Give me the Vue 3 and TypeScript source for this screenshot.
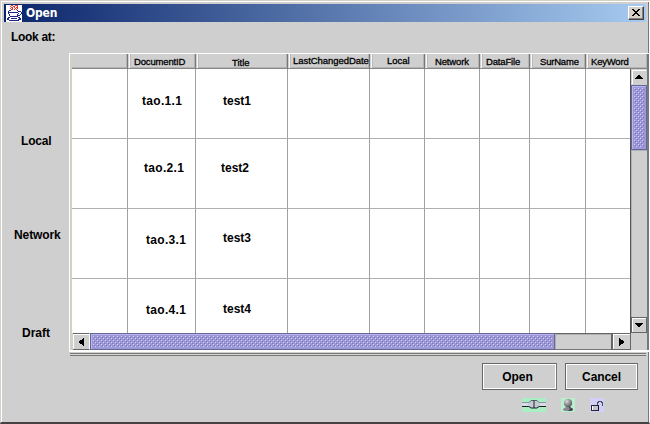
<script setup lang="ts">
interface Column { name: string; width: number; inset: number; drop: number; space: number }
interface Row { id: string; title: string; idX: number; titleX: number; idY: number; titleY: number }

const columns: Column[] = [
  { name: '', width: 56, inset: 0, drop: 0, space: 0 },
  { name: 'DocumentID', width: 68, inset: 6, drop: 1, space: -0.15 },
  { name: 'Title', width: 92, inset: 36, drop: 2, space: 0 },
  { name: 'LastChangedDate', width: 82, inset: 5, drop: 0, space: -0.05 },
  { name: 'Local', width: 55, inset: 17, drop: 0, space: 0 },
  { name: 'Network', width: 55, inset: 10, drop: 1, space: -0.15 },
  { name: 'DataFile', width: 50, inset: 6, drop: 1, space: -0.15 },
  { name: 'SurName', width: 56, inset: 10, drop: 1, space: -0.2 },
  { name: 'KeyWord', width: 61, inset: 5, drop: 1, space: -0.2 },
]
const rows: Row[] = [
  { id: 'tao.1.1', title: 'test1', idX: 14, titleX: 27, idY: 24, titleY: 24 },
  { id: 'tao.2.1', title: 'test2', idX: 16, titleX: 25, idY: 21, titleY: 21 },
  { id: 'tao.3.1', title: 'test3', idX: 18, titleX: 27, idY: 23, titleY: 21 },
  { id: 'tao.4.1', title: 'test4', idX: 18, titleX: 27, idY: 23, titleY: 22 },
]
const gridColumns = columns.map((c, i) => (i === 8 ? 45 : c.width) + 'px').join(' ')
const headColumns = columns.map(c => c.width + 'px').join(' ')
</script>

<template>
  <div class="window">
    <header class="titlebar">
      <svg class="java" width="16" height="17" viewBox="0 0 16 17" shape-rendering="crispEdges">
        <rect width="16" height="17" fill="#fff" />
        <path d="M5 0h2M9 0h3M4 1h1M7 1h2M11 1h1M5 2h2M8 2h1M10 2h2M4 3h1M6 3h1M9 3h1M11 3h1M5 4h2M8 4h1M10 4h1" transform="translate(0 .5)" stroke="#e33" fill="none" />
        <path d="M3 5h2M11 5h1M2 6h1M12 6h3M2 7h10M15 7h1M2 8h1M12 8h1M15 8h1M3 9h1M11 9h1M14 9h1M3 10h1M11 10h3M4 11h8M2 12h2M12 12h2M1 13h2M5 13h6M13 13h2M1 14h2M12 14h3M3 15h10" transform="translate(0 .5)" stroke="#20208f" fill="none" />
      </svg>
      <span class="caption">Open</span>
      <button class="close" aria-label="Close">
        <svg width="8" height="7" viewBox="0 0 8 7" shape-rendering="crispEdges">
          <path d="M0 0h2v1h1v1h2V1h1V0h2v1H7v1H6v1H5v1h1v1h1v1h1v1H6V6H5V5H3v1H2v1H0V6h1V5h1V4h1V3H2V2H1V1H0z" />
        </svg>
      </button>
    </header>
    <div class="look">Look at:</div>
    <main class="main">
      <nav class="places">
        <span class="place local">Local</span>
        <span class="place network">Network</span>
        <span class="place draft">Draft</span>
      </nav>
      <section class="panel">
        <div class="head" :style="{ gridTemplateColumns: headColumns }">
          <div v-for="c in columns" :key="c.name" class="th" :style="{ paddingLeft: c.inset + 'px', paddingTop: c.drop + 'px', letterSpacing: c.space + 'px' }">{{ c.name }}</div>
        </div>
        <div class="body">
          <div class="grid">
            <div v-for="r in rows" :key="r.id" class="row" :style="{ gridTemplateColumns: gridColumns }">
              <div v-for="(c, i) in columns" :key="c.name" class="td">
                <span v-if="i === 1" class="value id" :style="{ marginLeft: r.idX + 'px', marginTop: r.idY + 'px' }">{{ r.id }}</span>
                <span v-if="i === 2" class="value" :style="{ marginLeft: r.titleX + 'px', marginTop: r.titleY + 'px' }">{{ r.title }}</span>
              </div>
            </div>
          </div>
          <div class="vbar">
            <div class="step up"><svg width="8" height="4" viewBox="0 0 8 4" shape-rendering="crispEdges"><path d="M3 0h2v1h1v1h1v1h1v1H0V3h1V2h1V1h1z" /></svg></div>
            <div class="thumb vthumb">
              <svg class="bumps" shape-rendering="crispEdges">
                <defs>
                  <pattern id="bumps" width="4" height="4" patternUnits="userSpaceOnUse">
                    <path d="M0 0h1v1H0zM2 2h1v1H2z" fill="#d4d0fa" />
                    <path d="M1 1h1v1H1zM3 3h1v1H3z" fill="#7874b4" />
                  </pattern>
                </defs>
                <rect width="100%" height="100%" fill="url(#bumps)" />
              </svg>
            </div>
            <div class="track"></div>
            <div class="step down"><svg width="8" height="4" viewBox="0 0 8 4" shape-rendering="crispEdges"><path d="M0 0h8v1H7v1H6v1H5v1H3V3H2V2H1V1H0z" /></svg></div>
          </div>
        </div>
        <div class="hbar">
          <div class="step left"><svg width="5" height="8" viewBox="0 0 5 8" shape-rendering="crispEdges"><path d="M5 0v8H4V7H3V6H1V5H0V3h1V2h2V1h1V0z" /></svg></div>
          <div class="thumb hthumb">
            <svg class="bumps" shape-rendering="crispEdges"><rect width="100%" height="100%" fill="url(#bumps)" /></svg>
          </div>
          <div class="track htrack"></div>
          <div class="step right"><svg width="5" height="8" viewBox="0 0 5 8" shape-rendering="crispEdges"><path d="M0 0v8h1V7h1V6h2V5h1V3H4V2H2V1H1V0z" /></svg></div>
        </div>
      </section>
    </main>
    <div class="ledge"></div>
    <div class="actions">
      <button class="button open">Open</button>
      <button class="button cancel">Cancel</button>
    </div>
    <footer class="status">
      <svg class="plug" width="24" height="14" viewBox="0 0 24 14">
        <rect width="24" height="14" fill="#a9efc3" />
        <path d="M0 4h8v4H0zM16 4h8v4h-8z" fill="#d9dce5" />
        <path d="M0 4.5h7M17 4.5h7" stroke="#8b969b" />
        <path d="M0 8.5h8M16 8.5h8" stroke="#182025" />
        <path d="M6.5 5L9 2.5h6L17.5 5v3L15 10H9L6.5 8z" fill="#c5cad5" />
        <path d="M7 4.5L9 2.5h6l2 2" fill="none" stroke="#59646b" />
        <path d="M7 8.5L9 10h6l2-1.5M12 2.5V10" fill="none" stroke="#182025" />
      </svg>
      <svg class="person" width="14" height="14" viewBox="0 0 14 14">
        <defs><radialGradient id="head" cx=".35" cy=".3" r=".75"><stop stop-color="#ddd" /><stop offset=".5" stop-color="#929298" /><stop offset="1" stop-color="#55555c" /></radialGradient></defs>
        <rect width="14" height="14" fill="#b9efcd" />
        <path d="M5 8h4v1l3 2v1l-2 1H4l-2-1v-1l3-2z" fill="#888890" />
        <path d="M7 8h2v1l3 2v1l-2 1H7l2-2z" fill="#45454e" />
        <circle cx="7" cy="5" r="4.1" fill="url(#head)" />
      </svg>
      <svg class="lock" width="14" height="14" viewBox="0 0 14 14" shape-rendering="crispEdges">
        <rect width="14" height="14" fill="#d2d0f8" />
        <path d="M7.5 7V4.5h1v-1h3v1h1V8" fill="none" stroke="#4e4e62" />
        <rect x="1.5" y="7.5" width="7" height="5" fill="#c2c2cf" stroke="#282832" />
        <path d="M2.5 8v4" stroke="#fff" /><path d="M8.5 7v6" stroke="#151519" />
      </svg>
    </footer>
  </div>
</template>

<style>
body { margin: 0; overflow: hidden; }
</style>
<style scoped>
* { box-sizing: border-box; }
.window { width: 650px; height: 424px; background: #cfcfcf; border: 1px solid #d4d0c8; border-right: 1px solid #fff; border-bottom: 2px solid #454145; box-shadow: inset 1px 1px #fff, inset -1px 0 #777; padding: 3px 2px 0 3px; font: bold 12px/16px "Liberation Sans", Arial, sans-serif; color: #000; }
.titlebar { display: flex; align-items: center; height: 18px; width: 642px; padding-left: 2px; background: linear-gradient(90deg, #0a246a, #a6caf0); color: #fff; }
.java { flex: none; }
.caption { margin: 0 auto 0 4px; font-family: "DejaVu Sans Condensed", "DejaVu Sans", sans-serif; font-size: 12px; line-height: 18px; letter-spacing: -.2px; }
.close { width: 16px; height: 14px; margin-right: 2px; border: 1px solid; border-color: #fff #404040 #404040 #fff; box-shadow: inset -1px -1px #808080; background: #d4d0c8; display: flex; padding: 2px 0 0 3px; }
.look { height: 31px; padding: 7px 0 0 7px; letter-spacing: -.3px; }
.main { display: flex; margin-left: -2px; width: 647px; height: 299px; }
.places { display: flex; flex-direction: column; flex: none; width: 67px; }
.place { height: 16px; white-space: nowrap; }
.local { margin: 80px 0 0 19px; letter-spacing: -.2px; }
.network { margin: 78px 0 0 12px; letter-spacing: -.1px; }
.draft { margin: 82px 0 0 20px; }
.panel { width: 580px; flex: none; border: 1px solid #fff; border-right: 0; border-bottom: 2px solid #fff; padding-left: 2px; background: #d4d0c8; }
.head { display: grid; width: 577px; height: 15px; border-right: 2px solid #777; background: #cfcfcf; }
.th { height: 15px; overflow: hidden; border-right: 1px solid #777; border-bottom: 1px solid #888; box-shadow: inset 1px 0 #cfcfcf, inset 2px 0 #f8f8f8, inset 3px 0 #bbb, inset -1px -1px #b3b3b3; font: 9.5px/14px "Liberation Sans", Arial, sans-serif; white-space: nowrap; -webkit-text-stroke: .3px #000; }
.th:first-child { box-shadow: inset -1px -1px #b3b3b3; }
.th:last-child { border-right: 0; }
.body { display: flex; height: 264px; width: 577px; background: #cfcfcf; border-right: 2px solid #777; }
.grid { width: 558px; height: 264px; overflow: hidden; background: #fff; }
.row { display: grid; height: 70px; }
.td { display: flex; align-items: flex-start; border-right: 1px solid #a0a0a0; border-bottom: 1px solid #b0b0b0; }
.td:last-child { border-right: 0; }
.value { white-space: nowrap; }
.id { letter-spacing: .3px; }
.vbar { display: flex; flex-direction: column; width: 17px; height: 264px; border-left: 1px solid #555; }
.step { display: flex; align-items: center; justify-content: center; flex: none; background: #cfcfcf; border: 1px solid #666; box-shadow: inset 1px 1px #fff; }
.up, .down { width: 16px; height: 16px; }
.up { border-color: #cfcfcf; }
.track { flex: 1; background: #cfcfcf; box-shadow: inset 1px 1px #b0b0b0; }
.thumb { background: #9c98d8; border: 1px solid #666699; box-shadow: inset 1px 1px #b8b4ee; padding: 2px; flex: none; }
.vthumb { height: 65px; }
.bumps { display: block; width: 100%; height: 100%; }
.hbar { display: flex; width: 577px; height: 17px; padding: 0 16px 0 1px; background: #cfcfcf; border-right: 2px solid #777; }
.left { width: 17px; height: 17px; border-left: 0; border-right-color: #fff; }
.right { width: 20px; height: 17px; border-left-width: 2px; }
.hthumb { width: 465px; height: 17px; }
.htrack { border-top: 1px solid #666; border-bottom: 1px solid #777; }
.ledge { width: 576px; height: 3px; margin: 1px 0 0 66px; border-top: 1px solid #777; border-bottom: 1px solid #777; background: #d8d8d0; }
.actions { display: flex; gap: 8px; margin: 7px 0 0 478px; height: 27px; }
.button { display: block; height: 27px; border: 1px solid #666; border-right-color: #777; box-shadow: inset 1px 1px #fff, inset -1px -1px #fff; background: #cfcfcf; padding: 0 4px 0 0; font: inherit; }
.open { width: 75px; }
.cancel { width: 73px; letter-spacing: -.1px; padding: 0; }
.status { display: flex; align-items: center; height: 14px; margin: 8px 0 0 518px; }
.person { margin-left: 15px; }
.lock { margin-left: 15px; }
</style>
